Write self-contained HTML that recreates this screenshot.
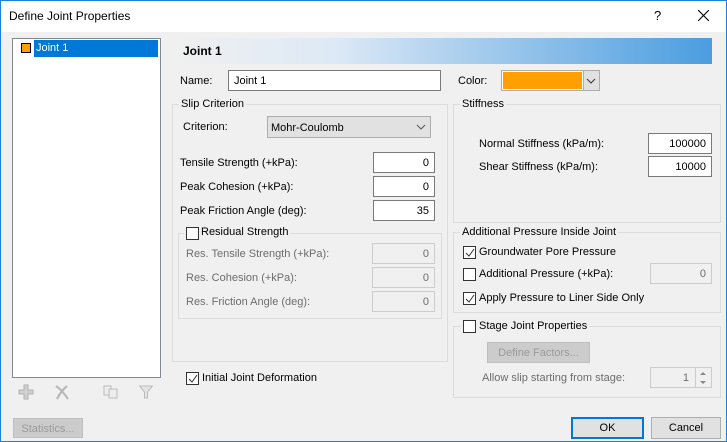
<!DOCTYPE html>
<html><head><style>
*{margin:0;padding:0;box-sizing:border-box}
body{width:727px;height:442px;overflow:hidden;background:#f0f0f0;font-family:"Liberation Sans",sans-serif;font-size:11px;color:#000;position:relative}
.a{position:absolute;white-space:nowrap}
.win{position:absolute;left:0;top:0;width:727px;height:442px;border:1px solid #1883d7}
.inp{position:absolute;background:#fff;border:1px solid #7a7a7a;text-align:right;padding:4px 5px 0 0;height:21px}
.dis{background:#f0f0f0;border-color:#ccc;color:#6d6d6d}
.grp{position:absolute;border:1px solid #dcdcdc}
.gl{position:absolute;background:#f0f0f0;padding:0 2px;white-space:nowrap}
.cb{position:absolute;width:13px;height:13px;border:1px solid #333;background:#fff}
.cb svg{position:absolute;left:0;top:0}
.g{color:#6d6d6d}
.btn{position:absolute;border:1px solid #adadad;background:#e1e1e1;text-align:center;padding-top:4px}
</style></head><body>
<div class="win"></div>
<div class="a" style="left:0;top:0;width:727px;height:32px;background:#fff;border:1px solid #1883d7;border-bottom:none"></div>
<div class="a" style="left:9px;top:9px;font-size:12px">Define Joint Properties</div>
<div class="a" style="left:654px;top:8px;font-size:13px">?</div>
<svg class="a" style="left:698px;top:10px" width="11" height="11"><path d="M0 0L11 11M11 0L0 11" stroke="#000" stroke-width="1.1"/></svg>

<div class="a" style="left:12px;top:38px;width:149px;height:340px;background:#fff;border:1px solid #828790"></div>
<div class="a" style="left:21px;top:43px;width:10px;height:10px;background:#ff9f00;border:1px solid #000"></div>
<div class="a" style="left:34px;top:40px;width:124px;height:17px;background:#0078d7;color:#fff;padding:2px 0 0 2px">Joint 1</div>

<svg class="a" style="left:18px;top:384px" width="16" height="16"><path d="M6 1h4v5h5v4h-5v5h-4v-5h-5v-4h5z" fill="#d0d0d0" stroke="#b0b0b0"/></svg>
<svg class="a" style="left:54px;top:384px" width="16" height="16"><path d="M2 2Q8 6 14 15M13 2Q7 7 3 15" stroke="#b8b8b8" stroke-width="2.2" fill="none"/></svg>
<svg class="a" style="left:103px;top:385px" width="16" height="14"><rect x="1" y="1" width="7" height="9" fill="#eee" stroke="#bbb"/><rect x="6" y="4" width="8" height="9" fill="#eee" stroke="#bbb"/></svg>
<svg class="a" style="left:139px;top:385px" width="14" height="14"><path d="M0.5 1h13l-5 6v6h-3v-6z" fill="#e4e4e4" stroke="#bbb"/></svg>
<div class="btn g" style="left:13px;top:418px;width:70px;height:20px;background:#ccc;border-color:#bfbfbf;color:#9a9a9a">Statistics...</div>

<div class="a" style="left:172px;top:38px;width:540px;height:26px;background:linear-gradient(to right,#f0f0f0,#dde9f6 30%,#4b9ddf)"></div>
<div class="a" style="left:183px;top:44px;font-size:12px;font-weight:bold">Joint 1</div>

<div class="a" style="left:180px;top:75px">Name:</div>
<div class="inp" style="left:228px;top:70px;width:213px;text-align:left;padding-left:5px">Joint 1</div>
<div class="a" style="left:458px;top:75px">Color:</div>
<div class="a" style="left:501px;top:70px;width:99px;height:21px;border:1px solid #adadad;background:#fff"></div>
<div class="a" style="left:503px;top:72px;width:79px;height:17px;background:#ff9f00"></div>
<div class="a" style="left:583px;top:71px;width:16px;height:19px;background:#e1e1e1;border-left:1px solid #adadad"></div>
<svg class="a" style="left:586px;top:78px" width="10" height="6"><path d="M1 1l4 4 4-4" stroke="#333" fill="none"/></svg>

<div class="grp" style="left:172px;top:104px;width:276px;height:258px"></div>
<div class="gl" style="left:179px;top:98px">Slip Criterion</div>
<div class="a" style="left:183px;top:121px">Criterion:</div>
<div class="a" style="left:267px;top:116px;width:164px;height:22px;background:#e1e1e1;border:1px solid #adadad;padding:5px 0 0 3px">Mohr-Coulomb</div>
<svg class="a" style="left:416px;top:124px" width="10" height="6"><path d="M1 1l4 4 4-4" stroke="#555" fill="none"/></svg>
<div class="a" style="left:180px;top:157px">Tensile Strength (+kPa):</div>
<div class="inp" style="left:373px;top:152px;width:62px">0</div>
<div class="a" style="left:180px;top:181px">Peak Cohesion (+kPa):</div>
<div class="inp" style="left:373px;top:176px;width:62px">0</div>
<div class="a" style="left:180px;top:205px">Peak Friction Angle (deg):</div>
<div class="inp" style="left:373px;top:200px;width:62px">35</div>

<div class="grp" style="left:178px;top:233px;width:264px;height:86px"></div>
<div class="gl" style="left:184px;top:226px;padding-left:17px">Residual Strength</div>
<div class="cb" style="left:186px;top:227px"></div>
<div class="a g" style="left:186px;top:248px">Res. Tensile Strength (+kPa):</div>
<div class="inp dis" style="left:372px;top:243px;width:63px">0</div>
<div class="a g" style="left:186px;top:272px">Res. Cohesion (+kPa):</div>
<div class="inp dis" style="left:372px;top:267px;width:63px">0</div>
<div class="a g" style="left:186px;top:296px">Res. Friction Angle (deg):</div>
<div class="inp dis" style="left:372px;top:291px;width:63px">0</div>

<div class="cb" style="left:186px;top:372px"><svg width="11" height="11"><path d="M2 6l3 3 5-7" stroke="#333" fill="none"/></svg></div>
<div class="a" style="left:202px;top:372px">Initial Joint Deformation</div>

<div class="grp" style="left:453px;top:104px;width:268px;height:119px"></div>
<div class="gl" style="left:460px;top:98px">Stiffness</div>
<div class="a" style="left:479px;top:138px">Normal Stiffness (kPa/m):</div>
<div class="inp" style="left:648px;top:133px;width:64px">100000</div>
<div class="a" style="left:479px;top:161px">Shear Stiffness (kPa/m):</div>
<div class="inp" style="left:648px;top:156px;width:64px">10000</div>

<div class="grp" style="left:453px;top:232px;width:268px;height:81px"></div>
<div class="gl" style="left:460px;top:226px">Additional Pressure Inside Joint</div>
<div class="cb" style="left:463px;top:246px"><svg width="11" height="11"><path d="M2 6l3 3 5-7" stroke="#333" fill="none"/></svg></div>
<div class="a" style="left:479px;top:246px">Groundwater Pore Pressure</div>
<div class="cb" style="left:463px;top:268px"></div>
<div class="a" style="left:479px;top:268px">Additional Pressure (+kPa):</div>
<div class="inp dis" style="left:650px;top:263px;width:62px">0</div>
<div class="cb" style="left:463px;top:292px"><svg width="11" height="11"><path d="M2 6l3 3 5-7" stroke="#333" fill="none"/></svg></div>
<div class="a" style="left:479px;top:292px">Apply Pressure to Liner Side Only</div>

<div class="grp" style="left:453px;top:326px;width:268px;height:72px"></div>
<div class="gl" style="left:461px;top:320px;padding-left:18px">Stage Joint Properties</div>
<div class="cb" style="left:463px;top:320px"></div>
<div class="btn" style="left:487px;top:342px;width:103px;height:21px;background:#ccc;border-color:#bfbfbf;color:#9a9a9a">Define Factors...</div>
<div class="a g" style="left:482px;top:372px">Allow slip starting from stage:</div>
<div class="inp dis" style="left:650px;top:367px;width:62px;padding-right:22px">1</div>
<div class="a" style="left:695px;top:368px;width:16px;height:19px;border-left:1px solid #ccc"></div>
<svg class="a" style="left:698px;top:371px" width="10" height="14"><path d="M2 4l3-3 3 3z M2 10l3 3 3-3z" fill="#888"/></svg>

<div class="btn" style="left:571px;top:417px;width:73px;height:22px;border:2px solid #0078d7;padding-top:3px">OK</div>
<div class="btn" style="left:651px;top:417px;width:70px;height:22px">Cancel</div>
</body></html>
